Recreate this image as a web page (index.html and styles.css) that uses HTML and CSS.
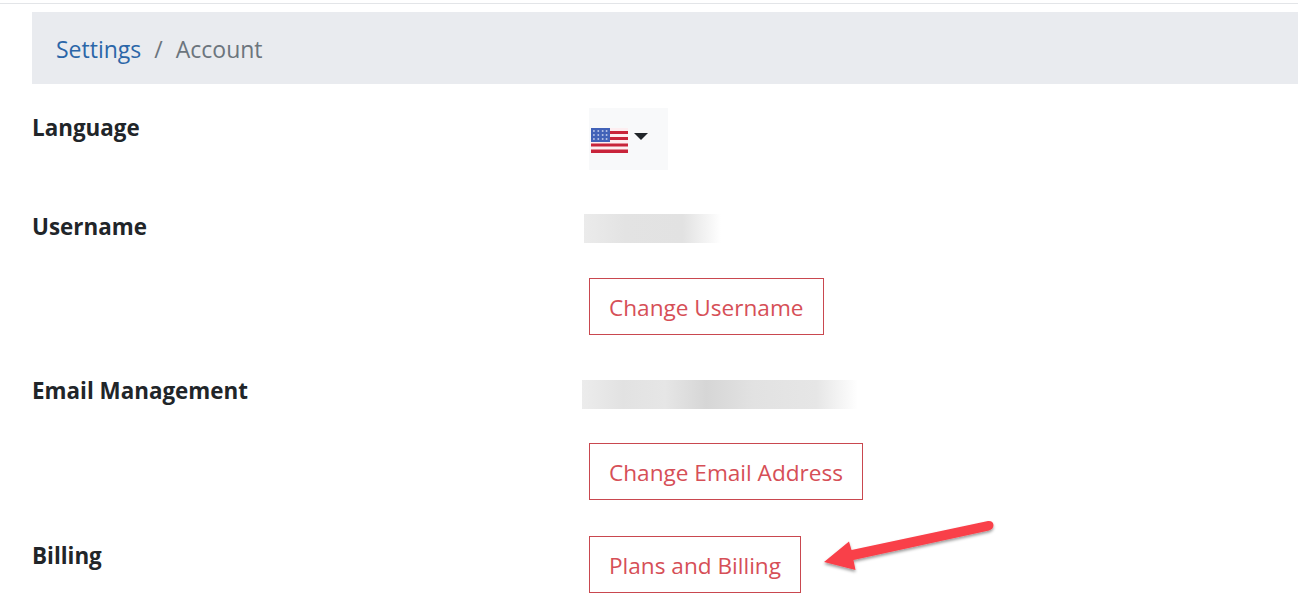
FILE: index.html
```html
<!DOCTYPE html>
<html lang="en">
<head>
    <meta charset="UTF-8">
    <meta name="viewport" content="width=device-width, initial-scale=1.0">
    <title>Account Settings</title>
    <link rel="stylesheet" href="styles.css">
</head>
<body>
    <div class="top-line"></div>
    <div class="content">
        <nav class="breadcrumb">
            <a href="#">Settings</a>
            <span class="divider">/</span>
            <span class="current">Account</span>
        </nav>

        <div class="row row-language">
            <div class="label">Language</div>
            <div class="value">
                <div class="lang-select">
                    <svg class="flag" width="37" height="25" viewBox="0 0 38 25" preserveAspectRatio="none">
                        <rect width="38" height="25" fill="#fdeef0"/>
                        <rect y="3" width="38" height="3" fill="#c8243a"/>
                        <rect y="9" width="38" height="3" fill="#c8243a"/>
                        <rect y="15.5" width="38" height="3" fill="#c8243a"/>
                        <rect y="21.5" width="38" height="3.5" fill="#c8243a"/>
                        <rect width="19.5" height="14" fill="#4262b8"/>
                        <g fill="#b9c4e6">
                            <circle cx="3" cy="3" r="1"/><circle cx="7.5" cy="3" r="1"/><circle cx="12" cy="3" r="1"/><circle cx="16" cy="3" r="1"/>
                            <circle cx="3" cy="7" r="1"/><circle cx="7.5" cy="7" r="1"/><circle cx="12" cy="7" r="1"/><circle cx="16" cy="7" r="1"/>
                            <circle cx="3" cy="11" r="1"/><circle cx="7.5" cy="11" r="1"/><circle cx="12" cy="11" r="1"/><circle cx="16" cy="11" r="1"/>
                        </g>
                    </svg>
                    <span class="caret"></span>
                </div>
            </div>
        </div>

        <div class="row row-username">
            <div class="label">Username</div>
            <div class="value">
                <div class="blur blur-username"></div>
                <a class="btn" href="#">Change Username</a>
            </div>
        </div>

        <div class="row row-email">
            <div class="label">Email Management</div>
            <div class="value">
                <div class="blur blur-email"></div>
                <a class="btn" href="#">Change Email Address</a>
            </div>
        </div>

        <div class="row row-billing">
            <div class="label">Billing</div>
            <div class="value">
                <a class="btn" href="#">Plans and Billing</a>
            </div>
        </div>
    </div>

    <!-- annotation drawn over the page -->
    <svg class="arrow" width="190" height="70" viewBox="810 515 190 70">
        <defs>
            <filter id="arrowShadow" x="-10%" y="-20%" width="120%" height="150%">
                <feDropShadow dx="0" dy="2" stdDeviation="1.8" flood-color="#000" flood-opacity="0.4"/>
            </filter>
        </defs>
        <path d="M824 562 L849 541.5 L851.5 550 L988 521 Q993 520.5 993.5 525 Q993.5 529 989 530.5 L853.5 560 L855.5 570 Z" fill="#f9404a" filter="url(#arrowShadow)"/>
    </svg>
</body>
</html>
```

FILE: styles.css
```css
html, body {
    margin: 0;
    padding: 0;
    background: #fff;
    overflow: hidden;
}
body {
    height: 608px;
    font-family: 'Open Sans', 'Noto Sans', sans-serif;
    color: #212529;
}
.top-line {
    height: 3px;
    border-bottom: 1px solid #e3e5e8;
}
.content {
    padding: 8px 0 0 32px;
}
.breadcrumb {
    display: flex;
    align-items: center;
    gap: 13px;
    height: 72px;
    padding: 2px 0 0 24px;
    box-sizing: border-box;
    background: #e9ebef;
    font-size: 23px;
}
.breadcrumb a {
    color: #2b66a8;
    text-decoration: none;
}
.divider, .current {
    color: #6c757d;
}
.row {
    display: grid;
    grid-template-columns: 557px 1fr;
}
.label {
    font-size: 22.4px;
    font-weight: 700;
    line-height: 30px;
}
.value {
    display: flex;
    flex-direction: column;
    align-items: flex-start;
}
.row-language {
    margin-top: 24px;
}
.row-language .label {
    margin-top: 5px;
}
.lang-select {
    display: flex;
    align-items: flex-start;
    gap: 6px;
    width: 79px;
    height: 62px;
    padding-left: 2px;
    box-sizing: border-box;
    background: #f8f9fa;
}
.flag {
    margin-top: 20px;
}
.caret {
    margin-top: 25px;
    border-left: 7.5px solid transparent;
    border-right: 7.5px solid transparent;
    border-top: 7.5px solid #212529;
}
.row-username {
    margin-top: 44px;
}
.row-username .label {
    margin-top: -2px;
}
.row-email {
    margin-top: 45px;
}
.row-email .label {
    margin-top: -4px;
}
.row-billing {
    margin-top: 36px;
}
.row-billing .label {
    margin-top: 5px;
}
.blur {
    height: 29px;
}
.blur-username {
    width: 137px;
    margin-left: -5px;
    margin-bottom: 35px;
    background: linear-gradient(90deg, #ebebeb 0%, #e3e3e3 30%, #e2e2e2 72%, #f4f4f4 90%, #fff 100%);
}
.blur-email {
    width: 276px;
    margin-left: -7px;
    margin-bottom: 34px;
    background: linear-gradient(90deg, #ececec 0%, #e2e2e2 15%, #e6e6e6 30%, #d6d6d6 45%, #e2e2e2 62%, #e6e6e6 85%, #fff 100%);
}
.btn {
    display: block;
    height: 57px;
    box-sizing: border-box;
    line-height: 57px;
    padding: 0 19px;
    border: 1px solid #c9484f;
    color: #d64f57;
    font-size: 22.6px;
    text-decoration: none;
    white-space: nowrap;
}
.arrow {
    position: absolute;
    left: 810px;
    top: 515px;
}
```
